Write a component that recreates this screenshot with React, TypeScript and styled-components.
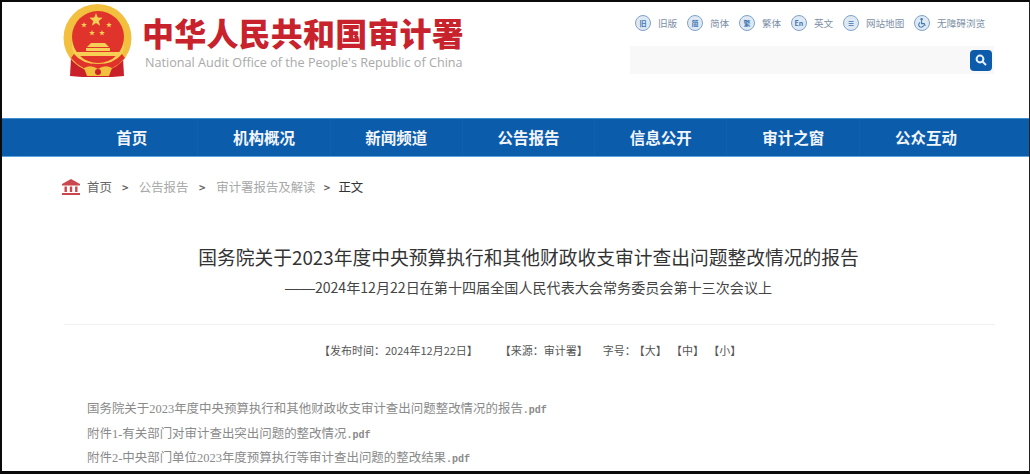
import styled, { createGlobalStyle } from 'styled-components'

const GlobalStyle = createGlobalStyle`
  html, body {
    margin: 0;
    padding: 0;
    background: #000;
  }
  * {
    box-sizing: border-box;
  }
`

const Page = styled.div`
  width: 1030px;
  height: 474px;
  overflow: hidden;
  background: #fff;
  border-top: 2px solid #0a0a0a;
  border-left: 2px solid #0a0a0a;
  border-bottom: 3px solid #0a0a0a;
  border-right: 1px solid #222;
  font-family: 'Noto Sans CJK SC', 'Liberation Sans', sans-serif;
`

const Header = styled.header`
  height: 116px;
  display: flex;
  justify-content: space-between;
  padding: 2px 33px 0 60px;
`

const Brand = styled.div`
  display: flex;
  align-items: flex-start;
  gap: 10px;
`

const BrandText = styled.div`
  display: flex;
  flex-direction: column;
  padding-top: 9px;
`

const BrandName = styled.div`
  font-size: 32px;
  line-height: 38px;
  font-weight: 900;
  color: #c8232c;
  letter-spacing: 0.2px;
  white-space: nowrap;
`

const BrandEnglish = styled.div`
  font-family: 'Open Sans', 'Liberation Sans', sans-serif;
  font-size: 12.62px;
  line-height: 17px;
  margin: 3px 0 0 3px;
  color: #a9a9a9;
  white-space: nowrap;
`

const Tools = styled.div`
  width: 366px;
  display: flex;
  flex-direction: column;
  align-items: flex-start;
  padding-top: 9px;
`

const ToolRow = styled.div`
  display: flex;
  align-items: center;
  height: 20px;
  padding-left: 5px;
`

const ToolItem = styled.div<{ $gap: number }>`
  display: flex;
  align-items: center;
  gap: 7px;
  margin-right: ${(p) => p.$gap}px;
  font-size: 9.6px;
  color: #7d8fa6;
  white-space: nowrap;
`

const ToolIcon = styled.span`
  width: 16px;
  height: 16px;
  border-radius: 50%;
  border: 1.5px solid #7fa3c9;
  background: #dfe9f4;
  color: #3f78b3;
  display: flex;
  align-items: center;
  justify-content: center;
  font-size: 7px;
  line-height: 1;
  font-weight: 700;
`

const SearchBar = styled.div`
  width: 364px;
  height: 28px;
  margin-top: 13px;
  background: #f8f8f8;
  display: flex;
  align-items: center;
  justify-content: flex-end;
  padding-right: 2px;
`

const SearchButton = styled.button`
  width: 22px;
  height: 21px;
  padding: 0;
  border: none;
  border-radius: 4px;
  background: #0d5cab;
  display: flex;
  align-items: center;
  justify-content: center;
`

const Nav = styled.nav`
  height: 39px;
  margin-left: -2px;
  padding-left: 66px;
  display: flex;
  align-items: stretch;
  background: #0b5cab;
  border-top: 1px solid #3d8ccc;
  border-bottom: 1px solid #5aa5dc;
`

const NavItem = styled.a`
  width: 132.3px;
  padding-bottom: 2px;
  display: flex;
  align-items: center;
  justify-content: center;
  font-size: 15.5px;
  font-weight: 700;
  color: #f2f6fb;
  border-right: 1px solid #0f61b0;
  &:last-child {
    border-right: none;
  }
`

const Crumbs = styled.div`
  display: flex;
  align-items: center;
  height: 22px;
  margin-top: 19px;
  padding-left: 60px;
  font-size: 12.4px;
  color: #555;
`

const CrumbIcon = styled.svg`
  width: 18px;
  height: 16px;
  margin-right: 7px;
`

const CrumbLink = styled.span<{ $muted?: boolean; $dark?: boolean }>`
  color: ${(p) => (p.$dark ? '#333' : p.$muted ? '#a8a8a8' : '#666')};
  white-space: nowrap;
`

const CrumbSep = styled.span<{ $w: number }>`
  width: ${(p) => p.$w}px;
  text-align: center;
  font-weight: 700;
  font-size: 11px;
  color: #666;
`

const Article = styled.main`
  padding: 0 34px 0 62px;
`

const Title = styled.h1`
  margin: 46px 0 0;
  padding-right: 2px;
  font-size: 18.75px;
  line-height: 26px;
  font-weight: 400;
  color: #333;
  text-align: center;
  white-space: nowrap;
`

const Subtitle = styled.h2`
  margin: 7px 0 0;
  padding-right: 2px;
  font-size: 14.1px;
  line-height: 20px;
  font-weight: 400;
  color: #444;
  text-align: center;
  white-space: nowrap;
`

const SubtitleDash = styled.span`
  font-family: 'Liberation Sans', sans-serif;
  font-size: 15px;
`

const Meta = styled.div`
  margin-top: 26px;
  border-top: 1px solid #f1f1f1;
  padding-left: 255px;
  display: flex;
  align-items: center;
  height: 50px;
  font-size: 11px;
  color: #555;
  white-space: nowrap;
`

const MetaPart = styled.span<{ $gap: number }>`
  margin-right: ${(p) => p.$gap}px;
`

const Files = styled.div`
  margin-top: 23px;
  padding-left: 23px;
  display: flex;
  flex-direction: column;
`

const FileLine = styled.div`
  height: 24.5px;
  line-height: 24.5px;
  font-family: 'Liberation Serif', 'Noto Sans CJK SC', serif;
  font-size: 12.46px;
  color: #8a8a8a;
  white-space: nowrap;
`

const FileExt = styled.span`
  font-family: 'Liberation Mono', monospace;
  font-weight: 700;
  font-size: 10px;
`

const tools = [
  { icon: '旧', label: '旧版' },
  { icon: '简', label: '简体' },
  { icon: '繁', label: '繁体' },
  { icon: 'En', label: '英文' },
  { icon: '≡', label: '网站地图' },
]

const navItems = ['首页', '机构概况', '新闻频道', '公告报告', '信息公开', '审计之窗', '公众互动']

const files = [
  { name: '国务院关于2023年度中央预算执行和其他财政收支审计查出问题整改情况的报告' },
  { name: '附件1-有关部门对审计查出突出问题的整改情况' },
  { name: '附件2-中央部门单位2023年度预算执行等审计查出问题的整改结果' },
]

function starPoints(cx: number, cy: number, r: number) {
  const pts: string[] = []
  for (let i = 0; i < 10; i++) {
    const radius = i % 2 === 0 ? r : r * 0.42
    const angle = (Math.PI / 5) * i - Math.PI / 2
    pts.push(`${(cx + radius * Math.cos(angle)).toFixed(2)},${(cy + radius * Math.sin(angle)).toFixed(2)}`)
  }
  return pts.join(' ')
}

function Emblem() {
  return (
    <svg width="70" height="74" viewBox="0 0 70 74">
      <path d="M9 54 L8 72 L20 73 L50 73 L62 72 L61 54 Z" fill="#c9202a" />
      <circle cx="35.5" cy="34" r="34" fill="#f3bf3f" />
      <circle cx="36" cy="33" r="26" fill="#e0332b" />
      <path d="M10 37 Q14 58 36 60 Q58 58 62 37 L62 44 Q58 62 36 64 Q14 62 10 44 Z" fill="#f6cf54" />
      <path d="M12 50 Q20 60 36 60 Q52 60 60 50 L63 54 Q52 67 36 67 Q20 67 9 54 Z" fill="#e0332b" />
      <polygon points={starPoints(34, 16, 7)} fill="#f6cf54" />
      <polygon points={starPoints(22, 21, 3)} fill="#f6cf54" />
      <polygon points={starPoints(47, 21, 3)} fill="#f6cf54" />
      <polygon points={starPoints(30, 29, 3)} fill="#f6cf54" />
      <polygon points={starPoints(40, 29, 3)} fill="#f6cf54" />
      <path d="M25 43 L29 39 L43 39 L47 43 Z" fill="#f6cf54" />
      <rect x="24" y="44" width="24" height="3" fill="#f6cf54" />
      <rect x="14" y="48" width="44" height="4" rx="1" fill="#f6cf54" />
      <path d="M22 64 Q29 60 36 65 Q43 60 50 64 L47 72 L25 72 Z" fill="#f3bf3f" />
      <circle cx="36" cy="68" r="3" fill="#c9202a" />
    </svg>
  )
}

export default function App() {
  return (
    <>
      <GlobalStyle />
      <Page>
        <Header>
          <Brand>
            <Emblem />
            <BrandText>
              <BrandName>中华人民共和国审计署</BrandName>
              <BrandEnglish>National Audit Office of the People's Republic of China</BrandEnglish>
            </BrandText>
          </Brand>
          <Tools>
            <ToolRow>
              {tools.map((t) => (
                <ToolItem key={t.label} $gap={9.8}>
                  <ToolIcon>{t.icon}</ToolIcon>
                  {t.label}
                </ToolItem>
              ))}
              <ToolItem $gap={0}>
                <ToolIcon>
                  <svg width="10" height="10" viewBox="0 0 10 10" fill="none" stroke="#3f78b3" strokeWidth="1.1">
                    <circle cx="4.6" cy="1.2" r="0.7" fill="#3f78b3" />
                    <path d="M4.6 2.6 V5.6 H7.2 L8.2 8" />
                    <path d="M3.2 4.4 A2.5 2.5 0 1 0 6.6 7.4" />
                  </svg>
                </ToolIcon>
                无障碍浏览
              </ToolItem>
            </ToolRow>
            <SearchBar>
              <SearchButton aria-label="搜索">
                <svg width="12" height="12" viewBox="0 0 12 12" fill="none" stroke="#e8f1fa" strokeWidth="2">
                  <circle cx="5" cy="5" r="3.4" />
                  <path d="M7.6 7.6 L11 11" />
                </svg>
              </SearchButton>
            </SearchBar>
          </Tools>
        </Header>
        <Nav>
          {navItems.map((item) => (
            <NavItem key={item}>{item}</NavItem>
          ))}
        </Nav>
        <Crumbs>
          <CrumbIcon viewBox="0 0 18 16" fill="#c9474d">
            <path d="M9 0 L18 5 V6.5 H0 V5 Z" />
            <rect x="2.5" y="7.5" width="2.4" height="5.5" />
            <rect x="7.8" y="7.5" width="2.4" height="5.5" />
            <rect x="13.1" y="7.5" width="2.4" height="5.5" />
            <rect x="0" y="14" width="18" height="2" />
          </CrumbIcon>
          <CrumbLink>首页</CrumbLink>
          <CrumbSep $w={27}>&gt;</CrumbSep>
          <CrumbLink $muted>公告报告</CrumbLink>
          <CrumbSep $w={28}>&gt;</CrumbSep>
          <CrumbLink $muted>审计署报告及解读</CrumbLink>
          <CrumbSep $w={23}>&gt;</CrumbSep>
          <CrumbLink $dark>正文</CrumbLink>
        </Crumbs>
        <Article>
          <Title>国务院关于2023年度中央预算执行和其他财政收支审计查出问题整改情况的报告</Title>
          <Subtitle>
            <SubtitleDash>——</SubtitleDash>2024年12月22日在第十四届全国人民代表大会常务委员会第十三次会议上
          </Subtitle>
          <Meta>
            <MetaPart $gap={22}>【发布时间：2024年12月22日】</MetaPart>
            <MetaPart $gap={15}>【来源：审计署】</MetaPart>
            <MetaPart $gap={-2}>字号：</MetaPart>
            <MetaPart $gap={4.2}>【大】</MetaPart>
            <MetaPart $gap={4.2}>【中】</MetaPart>
            <MetaPart $gap={0}>【小】</MetaPart>
          </Meta>
          <Files>
            {files.map((f) => (
              <FileLine key={f.name}>
                {f.name}
                <FileExt>.pdf</FileExt>
              </FileLine>
            ))}
          </Files>
        </Article>
      </Page>
    </>
  )
}
